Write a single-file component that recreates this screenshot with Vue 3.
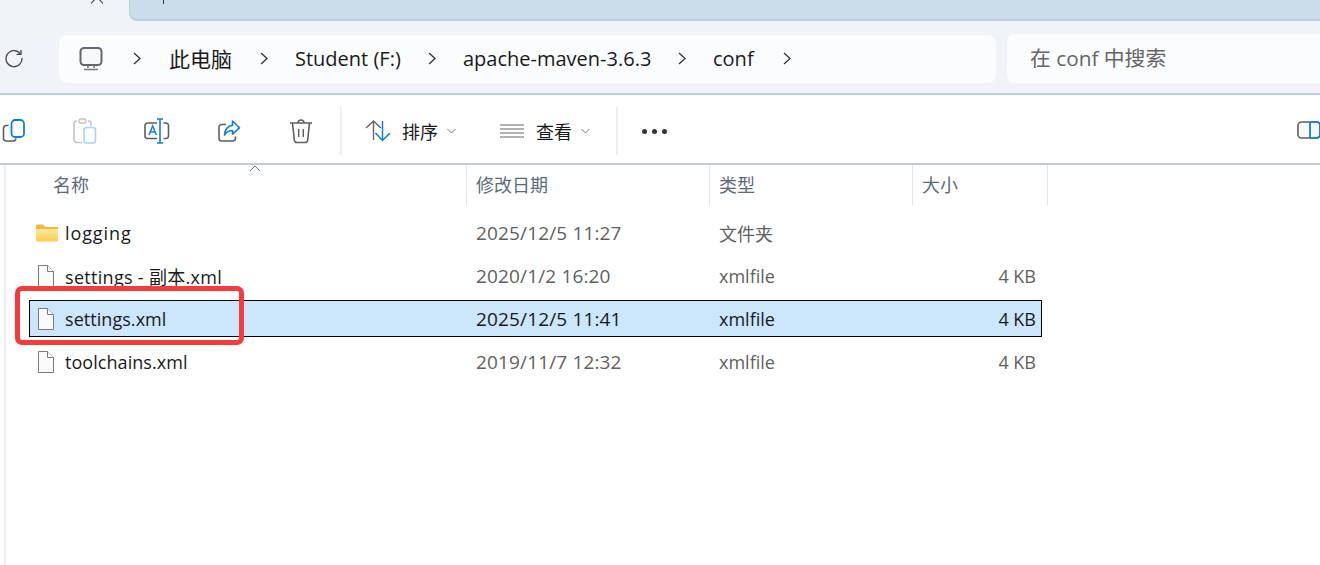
<script setup>
const crumbs = [
  { label: '此电脑', w: 64, cjk: true },
  { label: 'Student (F:)', w: 105 },
  { label: 'apache-maven-3.6.3', w: 187 },
  { label: 'conf', w: 42 }
]
const rows = [
  { name: 'logging', date: '2025/12/5 11:27', type: '文件夹', size: '', folder: true, track: 0.9 },
  { name: 'settings - 副本.xml', date: '2020/1/2 16:20', type: 'xmlfile', size: '4 KB', track: 0.3 },
  { name: 'settings.xml', date: '2025/12/5 11:41', type: 'xmlfile', size: '4 KB', selected: true, track: 0.05 },
  { name: 'toolchains.xml', date: '2019/11/7 12:32', type: 'xmlfile', size: '4 KB', track: 0.05 }
]
</script>

<template>
  <div class="window">
    <div class="tabs">
      <div class="tab-active">
        <svg class="tab-x" width="14" height="5" viewBox="0 0 14 5"><path d="M1 3.5 L7 -3 L13 3.5" fill="none" stroke="#444" stroke-width="1.1"/></svg>
      </div>
      <div class="tab-rest">
        <span class="tab-plus"></span>
      </div>
    </div>

    <div class="nav">
      <svg class="refresh" width="20" height="20" viewBox="0 0 20 20"><path d="M16.2 5.6 A8 8 0 1 0 18 10" fill="none" stroke="#444" stroke-width="1.3"/><path d="M17 2 V6.4 H12.6" fill="none" stroke="#444" stroke-width="1.3"/></svg>
      <div class="address">
        <svg class="pc" width="24" height="24" viewBox="0 0 24 24"><rect x="1.5" y="1" width="21" height="17" rx="3.5" fill="#f7f8f9" stroke="#666" stroke-width="2"/><path d="M9 18.5 V21 M15 18.5 V21 M5 22.5 H19" stroke="#777" stroke-width="1.6" fill="none"/></svg>
        <template v-for="c in crumbs" :key="c.label">
          <svg class="chev" width="8" height="13" viewBox="0 0 8 13"><path d="M1 1 L7 6.5 L1 12" fill="none" stroke="#333" stroke-width="1.3"/></svg>
          <span class="crumb" :class="{ cjk: c.cjk }" :style="{ width: c.w + 'px' }">{{ c.label }}</span>
        </template>
        <svg class="chev" width="8" height="13" viewBox="0 0 8 13"><path d="M1 1 L7 6.5 L1 12" fill="none" stroke="#333" stroke-width="1.3"/></svg>
      </div>
      <div class="search">在 conf 中搜索</div>
    </div>

    <div class="toolbar">
      <div class="tool">
        <svg width="24" height="24" viewBox="0 0 24 24"><path d="M7.5 6.5 H5 A3 3 0 0 0 2.5 9.5 V19 A3 3 0 0 0 5.5 22 H12 A3 3 0 0 0 15 19.5" fill="none" stroke="#5f5f5f" stroke-width="1.6"/><rect x="10.5" y="1" width="12.5" height="17" rx="3.5" fill="#fff" stroke="#0f7fd8" stroke-width="1.8"/></svg>
      </div>
      <div class="tool">
        <svg width="24" height="26" viewBox="0 0 24 26"><path d="M4 3 H3.5 A2.5 2.5 0 0 0 1 5.5 V22 A2.5 2.5 0 0 0 3.5 24.5 H9 M18 8 V5.5 A2.5 2.5 0 0 0 15.5 3 H15" fill="none" stroke="#c4c4c4" stroke-width="1.6"/><rect x="6" y="1" width="7" height="4" rx="1.5" fill="#fff" stroke="#c4c4c4" stroke-width="1.4"/><rect x="11" y="9.5" width="11.5" height="15.5" rx="2.5" fill="#fff" stroke="#a6d3f7" stroke-width="1.6"/></svg>
      </div>
      <div class="tool">
        <svg width="26" height="26" viewBox="0 0 26 26"><path d="M13 5 H3.5 A2.5 2.5 0 0 0 1 7.5 V18 A2.5 2.5 0 0 0 3.5 20.5 H13 M19.5 5 H21.5 A2.5 2.5 0 0 1 24.5 7.5 V18 A2.5 2.5 0 0 1 21.5 20.5 H19.5" fill="none" stroke="#5f5f5f" stroke-width="1.6"/><path d="M13 1 H19 M16 1 V25 M13 25 H19" fill="none" stroke="#0f7fd8" stroke-width="1.6"/><path d="M5 17 L8.7 8 L12.4 17 M6.3 14 H11.1" fill="none" stroke="#0f7fd8" stroke-width="1.5"/></svg>
      </div>
      <div class="tool">
        <svg width="24" height="24" viewBox="0 0 24 24"><path d="M9 5.5 H4.5 A2.5 2.5 0 0 0 2 8 V19.5 A2.5 2.5 0 0 0 4.5 22 H16 A2.5 2.5 0 0 0 18.5 19.5 V17.5" fill="none" stroke="#5f5f5f" stroke-width="1.6"/><path d="M15.5 2 L22.5 8.8 L15.5 15.2 V11.5 C12 11.5 9.5 12.8 7.5 16 C8 10.5 10.8 6.8 15.5 6.2 Z" fill="#fff" stroke="#0f7fd8" stroke-width="1.6" stroke-linejoin="round"/></svg>
      </div>
      <div class="tool">
        <svg width="24" height="26" viewBox="0 0 24 26"><path d="M1 5 H23 M9 5 A3 3 0 0 1 15 5" fill="none" stroke="#5f5f5f" stroke-width="1.6"/><path d="M3.5 5 L5.3 22 A2.6 2.6 0 0 0 8 24.5 H16 A2.6 2.6 0 0 0 18.7 22 L20.5 5" fill="none" stroke="#5f5f5f" stroke-width="1.6"/><path d="M9.7 11 V19 M14.3 11 V19" stroke="#5f5f5f" stroke-width="1.5"/></svg>
      </div>
      <div class="divider first"></div>
      <div class="drop sort">
        <svg width="26" height="22" viewBox="0 0 26 22"><path d="M1 8 L8.5 1 L16 8 M8.5 1 V20" fill="none" stroke="#666" stroke-width="1.4"/><path d="M10.5 13 L17.5 20.5 L25 13 M17.5 1 V20" fill="none" stroke="#0f7fd8" stroke-width="1.5"/></svg>
        <span>排序</span>
        <svg class="small-chev" width="9" height="6" viewBox="0 0 9 6"><path d="M0.5 1 L4.5 5 L8.5 1" fill="none" stroke="#777" stroke-width="1"/></svg>
      </div>
      <div class="drop view">
        <svg width="24" height="14" viewBox="0 0 24 14"><path d="M0 1 H24 M0 5 H24 M0 9 H24 M0 13 H24" stroke="#666" stroke-width="1.2"/></svg>
        <span>查看</span>
        <svg class="small-chev" width="9" height="6" viewBox="0 0 9 6"><path d="M0.5 1 L4.5 5 L8.5 1" fill="none" stroke="#777" stroke-width="1"/></svg>
      </div>
      <div class="divider second"></div>
      <div class="dots"><i></i><i></i><i></i></div>
      <svg class="panel" width="24" height="18" viewBox="0 0 24 18"><rect x="1" y="1" width="22" height="16" rx="3.5" fill="#f7f7f7" stroke="#5f5f5f" stroke-width="1.6"/><path d="M13 1 V17" stroke="#0f7fd8" stroke-width="1.8"/><path d="M13 1 H20 A3.5 3.5 0 0 1 23 4.5 V13.5 A3.5 3.5 0 0 1 20 17 H13" fill="none" stroke="#0f7fd8" stroke-width="1.6"/></svg>
    </div>

    <div class="content">
      <div class="head">
        <svg class="sort-caret" width="12" height="7" viewBox="0 0 12 7"><path d="M1 6 L6 1 L11 6" fill="none" stroke="#777" stroke-width="1"/></svg>
        <div class="h-cell h-name">名称</div>
        <div class="h-cell h-date">修改日期</div>
        <div class="h-cell h-type">类型</div>
        <div class="h-cell h-size">大小</div>
      </div>
      <div class="list">
        <div v-for="r in rows" :key="r.name" class="row" :class="{ selected: r.selected }">
          <div class="name">
            <svg v-if="r.folder" class="ficon folder" width="22" height="18" viewBox="0 0 22 18">
              <defs><linearGradient id="fold" x1="0" y1="0" x2="0" y2="1"><stop offset="0" stop-color="#ffe9a0"/><stop offset="1" stop-color="#fbcb4c"/></linearGradient></defs>
              <path d="M0 2 A1.5 1.5 0 0 1 1.5 .5 H7 L9.5 3 H22 V5 H0 Z" fill="#f5b73a"/>
              <path d="M0 5 H22 V16 A1.5 1.5 0 0 1 20.5 17.5 H1.5 A1.5 1.5 0 0 1 0 16 Z" fill="url(#fold)"/>
            </svg>
            <svg v-else class="ficon" width="22" height="22" viewBox="0 0 22 22"><path d="M3.5 .5 H12.5 L18.5 6.5 V21.5 H3.5 Z" fill="#fafafa" stroke="#7b7b7b"/><path d="M12.5 .5 V6.5 H18.5" fill="#fff" stroke="#7b7b7b"/></svg>
            <span :style="{ letterSpacing: r.track + 'px' }">{{ r.name }}</span>
          </div>
          <div class="date">{{ r.date }}</div>
          <div class="type">{{ r.type }}</div>
          <div class="size">{{ r.size }}</div>
        </div>
      </div>
      <div class="mark"></div>
    </div>
  </div>
</template>

<style>
html, body { margin: 0; background: #fff; overflow: hidden; }
</style>

<style scoped>
.window {
  position: relative;
  width: 1320px;
  height: 565px;
  overflow: hidden;
  background: #fff;
  color: #1a1a1a;
  font-family: "Open Sans", "Noto Sans CJK SC", sans-serif;
  font-size: 18px;
}
.tabs { display: flex; height: 21px; background: #eff4f9; }
.tab-active { position: relative; width: 129px; flex: none; }
.tab-x { position: absolute; left: 90px; top: 0; }
.tab-rest {
  position: relative;
  flex: 1;
  box-sizing: border-box;
  background: #cbdcea;
  border-left: 1px solid #bccddc;
  border-bottom: 2px solid #bccddc;
  border-bottom-left-radius: 8px;
}
.tab-plus { position: absolute; left: 33px; top: 0; width: 1px; height: 4px; background: #333; }
.nav {
  display: flex;
  align-items: center;
  height: 72px;
  background: #f0f4f9;
  padding-left: 4px;
  box-sizing: border-box;
}
.refresh { flex: none; margin-right: 35px; margin-top: 2px; }
.address {
  display: flex;
  align-items: center;
  box-sizing: border-box;
  width: 937px;
  height: 48px;
  margin-top: 3px;
  padding-left: 20px;
  border-radius: 8px;
  background: #fbfcfe;
}
.pc { flex: none; margin-right: 30px; }
.chev { flex: none; }
.crumb { margin: 0 28px 0 27px; white-space: nowrap; flex: none; font-size: 20px; line-height: 28px; }
.crumb.cjk { font-size: 21px; margin-left: 28px; margin-right: 27px; }
.search {
  box-sizing: border-box;
  flex: 1;
  height: 49px;
  line-height: 49px;
  margin: 2px 0 0 11px;
  padding-left: 23px;
  border-radius: 8px 0 0 8px;
  background: #fbfcfe;
  color: #666;
  font-size: 20.8px;
  white-space: nowrap;
}
.toolbar {
  position: relative;
  display: flex;
  align-items: center;
  box-sizing: border-box;
  height: 72px;
  padding-top: 4px;
  border-top: 2px solid #bccddc;
  border-bottom: 2px solid #bccddc;
  background: #fff;
  margin-left: -23px;
}
.tool { width: 72px; flex: none; display: flex; justify-content: center; align-items: center; }
.divider { width: 2px; height: 48px; background: #eeeeee; flex: none; }
.divider.first { margin-left: 3px; margin-right: 23px; }
.divider.second { margin-left: 26px; margin-right: 24px; }
.drop { display: flex; align-items: center; flex: none; }
.drop span { margin-left: 11px; line-height: 1; padding-top: 1px; }
.small-chev { margin-left: 9px; }
.view { margin-left: 44px; }
.view span { margin-left: 12px; }
.dots { display: flex; gap: 5px; flex: none; }
.dots i { display: block; width: 5px; height: 5px; border-radius: 50%; background: #333; }
.panel { position: absolute; left: 1320px; top: 26px; }
.content { position: relative; height: 400px; }
.content::before {
  content: "";
  position: absolute;
  left: 4px;
  top: 0;
  bottom: 0;
  width: 2px;
  background: #eeeeee;
}
.head { position: relative; display: flex; height: 40px; color: #5c6b7a; }
.sort-caret { position: absolute; left: 249px; top: 0; }
.h-cell {
  box-sizing: border-box;
  height: 40px;
  line-height: 41px;
  padding-left: 9px;
  border-right: 1px solid #e5e5e5;
  flex: none;
}
.h-name { width: 467px; padding-left: 53px; }
.h-date { width: 243px; }
.h-type { width: 203px; }
.h-size { width: 135px; }
.list { display: flex; flex-direction: column; gap: 6px; margin: 9px 0 0 29px; width: 1013px; }
.row {
  display: grid;
  grid-template-columns: 446px 243px 1fr 100px;
  align-items: center;
  box-sizing: border-box;
  height: 37px;
  border: 1px solid transparent;
  color: #5f5f5f;
}
.row.selected { background: #cce6fc; border-color: #000; color: #1a1a1a; }
.name { display: flex; align-items: center; color: #1a1a1a; white-space: nowrap; }
.ficon { flex: none; margin-left: 5px; margin-right: 8px; }
.ficon.folder { margin-left: 6px; margin-right: 7px; }
.date { font-size: 19px; letter-spacing: .15px; }
.size { text-align: right; padding-right: 5px; }
.mark {
  position: absolute;
  left: 15px;
  top: 121px;
  box-sizing: border-box;
  width: 229px;
  height: 59px;
  border: 5px solid #f53c3c;
  border-radius: 7px;
}
</style>
